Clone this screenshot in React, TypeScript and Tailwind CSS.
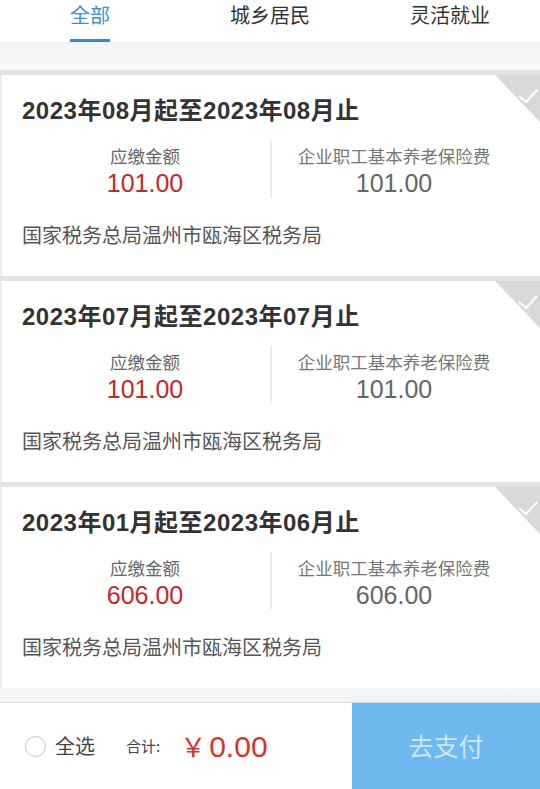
import React from "react";

const font = { fontFamily: '"Noto Sans CJK SC", "Noto Sans", sans-serif' };
const mixed = { fontFamily: '"Liberation Sans", "Noto Sans CJK SC", sans-serif' };

type Item = { title: string; amount: string };

const items: Item[] = [
  { title: "2023年08月起至2023年08月止", amount: "101.00" },
  { title: "2023年07月起至2023年07月止", amount: "101.00" },
  { title: "2023年01月起至2023年06月止", amount: "606.00" },
];

function Corner() {
  return (
    <svg className="absolute right-0 top-0" width="45" height="47" viewBox="0 0 45 47">
      <polygon points="0,0 45,0 45,47" fill="#d7d9db" />
      <polyline points="24,21 31,27 42,15" fill="none" stroke="#ffffff" strokeWidth="2" />
    </svg>
  );
}

function Card({ item }: { item: Item }) {
  return (
    <div className="relative h-[201px] shrink-0 bg-white border-l-2 border-[#ececec] pt-[21px]">
      <Corner />
      <div className="pl-[20px] text-[24px] leading-[30px] font-semibold tracking-[0.5px] text-[#333333]" style={mixed}>
        {item.title}
      </div>
      <div className="mt-[18px] flex">
        <div className="flex w-[268px] flex-col items-center pl-[18px]">
          <div className="text-[17.5px] leading-[24px] text-[#666666]">应缴金额</div>
          <div className="text-[25px] leading-[30px] text-[#c8262b]" style={mixed}>{item.amount}</div>
        </div>
        <div className="mt-[-4px] h-[57px] w-[2px] bg-[#ebebeb]" />
        <div className="flex w-[250px] flex-col items-center pr-[6px]">
          <div className="text-[17.5px] leading-[24px] text-[#777777]">企业职工基本养老保险费</div>
          <div className="text-[25px] leading-[30px] text-[#666666]" style={mixed}>{item.amount}</div>
        </div>
      </div>
      <div className="mt-[23px] pl-[20px] text-[20px] leading-[28px] text-[#555555]">国家税务总局温州市瓯海区税务局</div>
    </div>
  );
}

export default function App() {
  return (
    <div className="flex h-[789px] w-[540px] flex-col overflow-hidden bg-[#e2e3e4]" style={font}>
      <div className="flex h-[42px] shrink-0 bg-white">
        {[
          { t: "全部", a: true },
          { t: "城乡居民", a: false },
          { t: "灵活就业", a: false },
        ].map((tab) => (
          <div key={tab.t} className="flex w-[180px] flex-col items-center">
            <div className={`mt-[1px] text-[20px] leading-[28px] ${tab.a ? "text-[#3a93d6]" : "text-[#333333]"}`}>{tab.t}</div>
            {tab.a && <div className="mt-[10px] h-[3px] w-[40px] bg-[#2f8ad3]" />}
          </div>
        ))}
      </div>
      <div className="h-[28px] shrink-0 bg-gradient-to-b from-[#f2f3f4] to-[#f7f8f8]" />
      <div className="h-[5px] shrink-0 bg-[#e2e2e2]" />
      <div className="flex shrink-0 flex-col gap-[5px]">
        {items.map((it, i) => (
          <Card key={i} item={it} />
        ))}
      </div>
      <div className="h-[14px] shrink-0 bg-gradient-to-b from-[#f6f7f8] to-[#f1f2f3]" />
      <div className="flex h-[87px] shrink-0 border-t border-[#dcdcdc] bg-white">
        <div className="flex flex-1 items-center pl-[25px]">
          <div className="h-[21px] w-[21px] rounded-full border border-[#c4c4c4]" />
          <div className="ml-[9px] text-[20px] text-[#444444]">全选</div>
          <div className="ml-[31px] text-[15px] text-[#444444]">合计:</div>
          <div className="ml-[20px] flex items-baseline text-[#d9322c]">
            <span className="text-[26px]">￥</span>
            <span className="ml-[3px] text-[30px]" style={mixed}>0.00</span>
          </div>
        </div>
        <div className="flex w-[188px] items-center justify-center bg-[#6fb9f1] text-[25px] text-[#cfe6f8]">去支付</div>
      </div>
    </div>
  );
}
